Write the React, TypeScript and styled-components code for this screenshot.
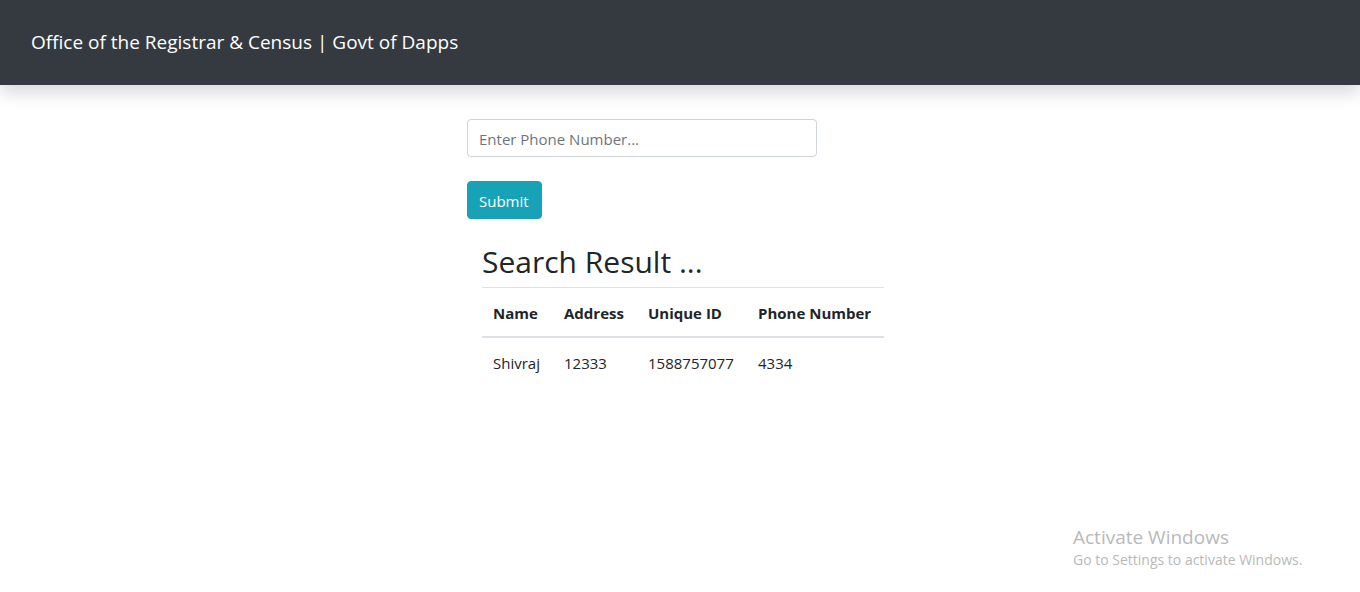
import React, { useState } from "react";
import styled, { createGlobalStyle } from "styled-components";

const GlobalStyle = createGlobalStyle`
  *, *::before, *::after { box-sizing: border-box; }
  body {
    margin: 0;
    background: #fff;
    color: #212529;
    font-family: "Segoe UI", "Open Sans", "Noto Sans", sans-serif;
    font-size: 16px;
    line-height: 24px;
  }
`;

const Page = styled.div`
  display: flex;
  flex-direction: column;
  min-height: 100vh;
`;

const Navbar = styled.nav`
  display: flex;
  align-items: center;
  padding: 24px 31px 25px;
  background: #343a40;
  box-shadow: 0 8px 16px rgba(0, 0, 0, 0.15);
`;

const Brand = styled.a`
  padding: 3px 0;
  color: #fff;
  font-size: 19px;
  line-height: 30px;
  text-decoration: none;
  white-space: nowrap;
`;

const Content = styled.main`
  width: 426px;
  margin: 34px auto 0;
`;

const SearchForm = styled.form`
  display: flex;
  flex-direction: column;
  align-items: flex-start;
  gap: 24px;
`;

const PhoneInput = styled.input`
  width: 350px;
  height: 38px;
  padding: 7px 11px 5px;
  border: 1px solid #ced4da;
  border-radius: 4px;
  background: #fff;
  color: #495057;
  font: inherit;
  font-size: 15px;
  &::placeholder { color: #6c757d; opacity: 1; }
`;

const SubmitButton = styled.button`
  height: 38px;
  padding: 7px 12px 5px 11px;
  border: 1px solid #17a2b8;
  border-radius: 4px;
  background: #17a2b8;
  color: #fff;
  font: inherit;
  font-size: 15px;
  cursor: pointer;
`;

const Results = styled.section`
  padding: 24px 9px 0 15px;
`;

const ResultsTitle = styled.h2`
  margin: 0 0 6px;
  font-size: 30px;
  font-weight: 400;
  line-height: 38px;
`;

const ResultsTable = styled.table`
  width: 402px;
  table-layout: fixed;
  border-collapse: collapse;
  font-size: 15px;
`;

const Column = styled.col<{ $width: number }>`
  width: ${({ $width }) => $width}px;
`;

const HeadCell = styled.th`
  padding: 13px 0 11px 11px;
  border-top: 1px solid #dee2e6;
  border-bottom: 2px solid #dee2e6;
  text-align: left;
  font-weight: 700;
  white-space: nowrap;
`;

const Cell = styled.td`
  padding: 13px 0 11px 11px;
  white-space: nowrap;
`;

const Watermark = styled.aside`
  width: 236px;
  margin: auto 51px 21px auto;
  color: #b9b9b9;
`;

const WatermarkTitle = styled.p`
  margin: 0;
  font-size: 19px;
  line-height: 24px;
`;

const WatermarkText = styled.p`
  margin: 0;
  font-size: 14px;
  line-height: 22px;
`;

const columns = [
  { label: "Name", width: 71 },
  { label: "Address", width: 84 },
  { label: "Unique ID", width: 110 },
  { label: "Phone Number", width: 137 },
];

const records = [["Shivraj", "12333", "1588757077", "4334"]];

export default function App() {
  const [phone, setPhone] = useState("");

  return (
    <Page>
      <GlobalStyle />
      <Navbar>
        <Brand href="#">Office of the Registrar &amp; Census | Govt of Dapps</Brand>
      </Navbar>
      <Content>
        <SearchForm onSubmit={(event) => event.preventDefault()}>
          <PhoneInput
            type="text"
            aria-label="Phone number"
            placeholder="Enter Phone Number..."
            value={phone}
            onChange={(event) => setPhone(event.target.value)}
          />
          <SubmitButton type="submit">Submit</SubmitButton>
        </SearchForm>
        <Results>
          <ResultsTitle>Search Result ...</ResultsTitle>
          <ResultsTable>
            <colgroup>
              {columns.map(({ label, width }) => (
                <Column key={label} $width={width} />
              ))}
            </colgroup>
            <thead>
              <tr>
                {columns.map(({ label }) => (
                  <HeadCell key={label} scope="col">{label}</HeadCell>
                ))}
              </tr>
            </thead>
            <tbody>
              {records.map((record) => (
                <tr key={record[2]}>
                  {record.map((value, index) => (
                    <Cell key={columns[index].label}>{value}</Cell>
                  ))}
                </tr>
              ))}
            </tbody>
          </ResultsTable>
        </Results>
      </Content>
      <Watermark>
        <WatermarkTitle>Activate Windows</WatermarkTitle>
        <WatermarkText>Go to Settings to activate Windows.</WatermarkText>
      </Watermark>
    </Page>
  );
}
